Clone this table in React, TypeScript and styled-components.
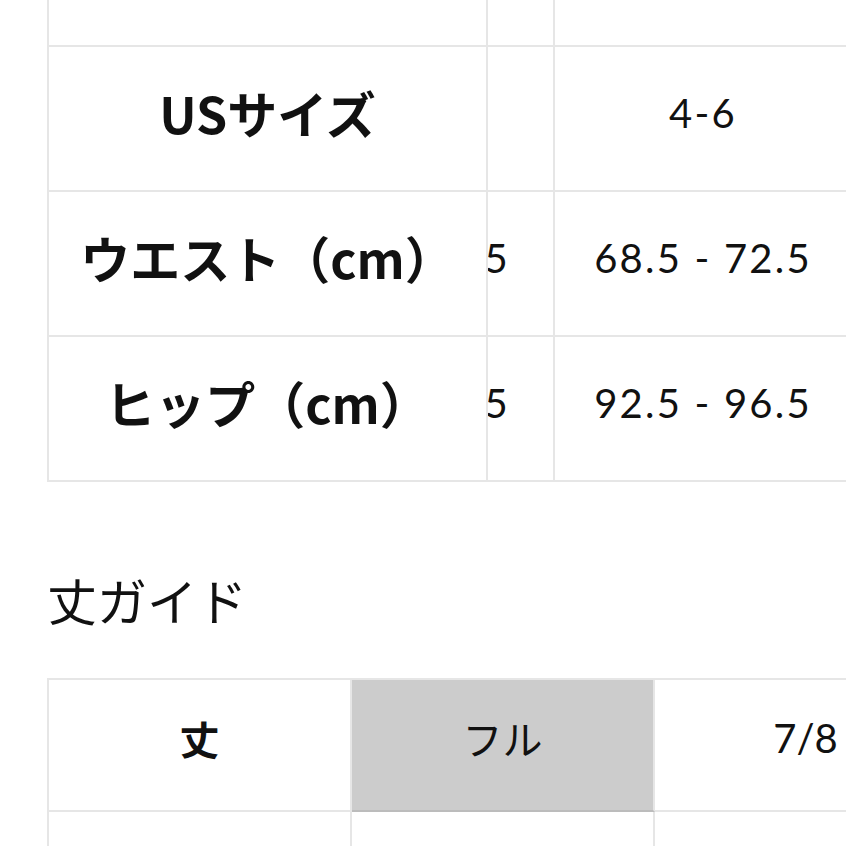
import React, { useLayoutEffect, useRef } from 'react';
import styled, { createGlobalStyle } from 'styled-components';

const GlobalStyle = createGlobalStyle`
  html, body {
    margin: 0;
    padding: 0;
    background: #fff;
    overflow: hidden;
  }
  body {
    font-family: "Noto Sans CJK JP", "Noto Sans", sans-serif;
    color: #111;
  }
`;

const LINE = '#e6e6e6';

const sizeRows = [
  { label: 'サイズ', values: ['XS', 'S', 'M', 'L'] },
  { label: 'USサイズ', values: ['0-2', '4-6', '8-10', '12-14'] },
  { label: 'ウエスト（cm）', values: ['64.5 - 68.5', '68.5 - 72.5', '72.5 - 76.5', '76.5 - 80.5'] },
  { label: 'ヒップ（cm）', values: ['88.5 - 92.5', '92.5 - 96.5', '96.5 - 100.5', '100.5 - 104.5'] },
];

const lengthRows = [
  { label: '丈', values: ['フル', '7/8', 'クロップド'], active: 0 },
  { label: '股下（cm）', values: ['76', '69', '61'], active: -1 },
];

export default function App() {
  const scrollerRef = useRef<HTMLDivElement>(null);

  // the size table is shown scrolled sideways, first column stays put
  useLayoutEffect(() => {
    if (scrollerRef.current) scrollerRef.current.scrollLeft = 239;
  }, []);

  return (
    <Page>
      <GlobalStyle />
      <SizeScroller ref={scrollerRef}>
        {sizeRows.map((row) => (
          <SizeRow key={row.label}>
            <LabelCell>{row.label}</LabelCell>
            {row.values.map((v, i) => (
              <ValueCell key={i}>{v}</ValueCell>
            ))}
          </SizeRow>
        ))}
      </SizeScroller>

      <SectionTitle>丈ガイド</SectionTitle>

      <LengthWrap>
        <LengthTable>
          {lengthRows.map((row) => (
            <React.Fragment key={row.label}>
              <LengthCell $head>{row.label}</LengthCell>
              {row.values.map((v, i) => (
                <LengthCell key={i} $active={i === row.active}>
                  {v}
                </LengthCell>
              ))}
            </React.Fragment>
          ))}
        </LengthTable>
      </LengthWrap>
    </Page>
  );
}

const Page = styled.div`
  margin-top: -100px;
  padding-left: 47px;
`;

const SizeScroller = styled.div`
  overflow-x: auto;
  border-left: 2px solid ${LINE};
  border-top: 2px solid ${LINE};
  scrollbar-width: none;
  &::-webkit-scrollbar {
    display: none;
  }
`;

const SizeRow = styled.div`
  display: grid;
  grid-template-columns: 439px 306px repeat(3, 298px);
  width: max-content;
`;

const Cell = styled.div`
  box-sizing: border-box;
  height: 145px;
  padding-bottom: 12px;
  display: flex;
  align-items: center;
  justify-content: center;
  border-right: 2px solid ${LINE};
  border-bottom: 2px solid ${LINE};
  white-space: nowrap;
`;

const LabelCell = styled(Cell)`
  position: sticky;
  left: 0;
  z-index: 1;
  padding-bottom: 14px;
  background: #fff;
  font-size: 50px;
  font-weight: 700;
`;

const ValueCell = styled(Cell)`
  font-family: Lato, "Noto Sans CJK JP", sans-serif;
  font-size: 40px;
  letter-spacing: 2.2px;
  font-weight: 400;
`;

const SectionTitle = styled.h2`
  margin: 92px 0 54px;
  font-size: 50px;
  line-height: 1;
  font-weight: 400;
`;

const LengthWrap = styled.div`
  overflow: hidden;
`;

const LengthTable = styled.div`
  display: grid;
  grid-template-columns: repeat(4, 303px);
  width: max-content;
  border-left: 2px solid ${LINE};
  border-top: 2px solid ${LINE};
`;

const LengthCell = styled.div<{ $head?: boolean; $active?: boolean }>`
  box-sizing: border-box;
  height: 132px;
  padding-bottom: 14px;
  display: flex;
  align-items: center;
  justify-content: center;
  border-right: 2px solid ${LINE};
  border-bottom: 2px solid ${(p) => (p.$active ? '#bcbcbc' : LINE)};
  background: ${(p) => (p.$active ? '#cccccc' : '#fff')};
  font-family: ${(p) => (p.$head ? '"Noto Sans CJK JP"' : 'Lato, "Noto Sans CJK JP"')}, sans-serif;
  font-size: 40px;
  font-weight: ${(p) => (p.$head ? 700 : 400)};
  white-space: nowrap;
`;
